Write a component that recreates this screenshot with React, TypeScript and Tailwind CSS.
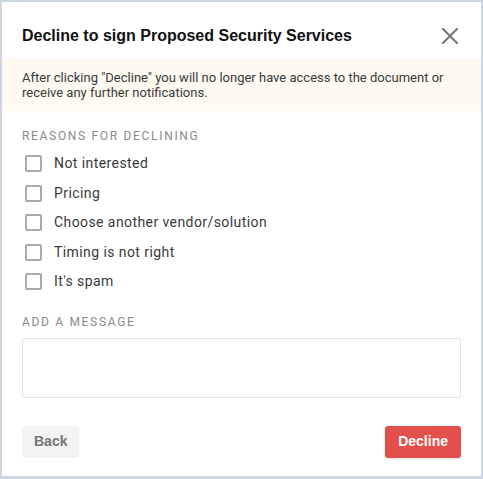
const reasons = [
  "Not interested",
  "Pricing",
  "Choose another vendor/solution",
  "Timing is not right",
  "It's spam",
];

function CloseIcon() {
  return (
    <svg width="16" height="16" viewBox="0 0 16 16" className="text-[#777]">
      <path d="M1 1L15 15M15 1L1 15" stroke="currentColor" strokeWidth="2" strokeLinecap="square" />
    </svg>
  );
}

export default function App() {
  return (
    <div className="w-[483px] h-[479px] bg-[#cdd6e0] pt-[2px] pl-[2px] pr-[2px] pb-[3px] font-['Roboto',sans-serif]">
      <div className="h-full bg-white flex flex-col">
        {/* Header */}
        <div className="flex items-center justify-between pl-5 pr-[23px] h-[56px] pt-[11px]">
          <h1 className="font-['Liberation_Sans',Arial,sans-serif] font-bold text-[16px] text-[#111]">
            Decline to sign Proposed Security Services
          </h1>
          <CloseIcon />
        </div>

        {/* Warning banner */}
        <div className="bg-[#fef9f1] px-5 pt-[12px] pb-[11px] text-[13px] leading-[15px] text-[#3a3a3a]">
          After clicking "Decline" you will no longer have access to the document or receive any further notifications.
        </div>

        <div className="px-5 pt-[18px] flex flex-col">
          <p className="text-[12px] tracking-[0.14em] text-[#8a8a8a] uppercase leading-[14px]">Reasons for declining</p>
          <div className="mt-[6px] flex flex-col">
            {reasons.map((r) => (
              <label key={r} className="flex items-center h-[29.5px] gap-[12px] pl-[3px]">
                <span className="w-[17px] h-[17px] border-2 border-[#aaa] rounded-[2px] bg-white" />
                <span className="text-[14px] tracking-[0.03em] text-[#3a3a3a]">{r}</span>
              </label>
            ))}
          </div>

          <p className="mt-[18px] text-[12px] tracking-[0.14em] text-[#8a8a8a] uppercase leading-[14px]">Add a message</p>
          <textarea className="mt-[9px] h-[60px] w-full border border-[#e1e1e1] rounded-[2px] resize-none outline-none" />

          <div className="mt-[28px] flex justify-between">
            <button className="h-[32px] px-3 rounded-[3px] bg-[#f3f3f3] text-[#777] font-['Liberation_Sans',Arial,sans-serif] font-bold text-[14px]">
              Back
            </button>
            <button className="h-[32px] px-[13px] rounded-[3px] bg-[#e3504b] text-white font-['Liberation_Sans',Arial,sans-serif] font-bold text-[14px] shadow-sm">
              Decline
            </button>
          </div>
        </div>
      </div>
    </div>
  );
}
